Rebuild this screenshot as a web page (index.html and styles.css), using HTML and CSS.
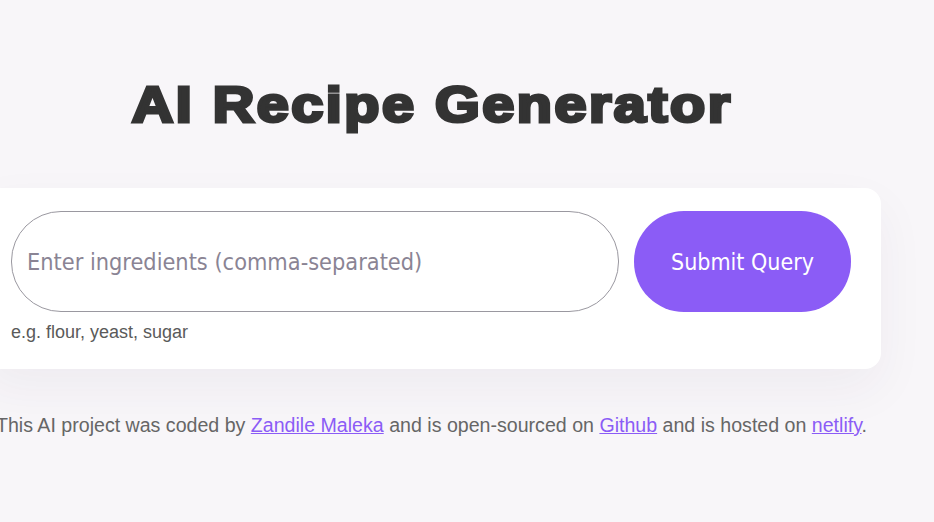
FILE: index.html
```html
<!DOCTYPE html>
<html lang="en">
<head>
<meta charset="utf-8">
<title>AI Recipe Generator</title>
<link rel="stylesheet" href="styles.css">
</head>
<body>
<main class="page">
  <h1 class="title">AI Recipe Generator</h1>
  <form class="card">
    <div class="field">
      <input class="input" type="text" placeholder="Enter ingredients (comma-separated)">
      <small class="hint">e.g. flour, yeast, sugar</small>
    </div>
    <button class="submit" type="button">Submit Query</button>
  </form>
  <footer class="footer">This AI project was coded by <a href="#">Zandile Maleka</a> and is open-sourced on <a href="#">Github</a> and is hosted on <a href="#">netlify</a>.</footer>
</main>
</body>
</html>
```
FILE: styles.css
```css
html, body {
  margin: 0;
  padding: 0;
}
body {
  background: #f8f6f9;
  font-family: "Liberation Sans", Arial, sans-serif;
  overflow: hidden;
  height: 522px;
}
.page {
  width: 900px;
  margin-left: -19px;
  padding-top: 70px;
}
.title {
  margin: 0 0 50px;
  padding-left: 2px;
  text-align: center;
  font-size: 50px;
  font-weight: 700;
  color: #333;
  line-height: 70px;
  letter-spacing: 2.2px;
  -webkit-text-stroke: 3.2px #333;
  transform: scaleX(1.15);
}
.card {
  margin-top: -2px;
  background: #fff;
  border-radius: 16px;
  padding: 23px 30px 26px;
  display: flex;
  align-items: flex-start;
  gap: 15px;
  box-shadow: 0 20px 50px rgba(60, 40, 80, 0.05);
}
.field {
  display: flex;
  flex-direction: column;
  width: 608px;
}
.input {
  box-sizing: border-box;
  height: 101px;
  width: 608px;
  border: 1px solid #9a98a0;
  border-radius: 50px;
  padding: 0 15px;
  font-family: "DejaVu Sans Condensed", "DejaVu Sans", sans-serif;
  font-size: 23.3px;
  color: #333;
  background: #fff;
  outline: none;
}
.input::placeholder {
  color: #8a8494;
}
.hint {
  margin-top: 10px;
  font-size: 18px;
  color: #5a5a5a;
  line-height: 21px;
}
.submit {
  width: 217px;
  height: 101px;
  border: none;
  border-radius: 50px;
  background: #8b5cf6;
  color: #fff;
  font-family: "DejaVu Sans Condensed", "DejaVu Sans", sans-serif;
  font-size: 23px;
  cursor: pointer;
}
.footer {
  margin-top: 44px;
  padding-left: 1px;
  text-align: center;
  font-size: 19.6px;
  color: #666;
  line-height: 24px;
}
.footer a {
  color: #8b5cf6;
}
```
